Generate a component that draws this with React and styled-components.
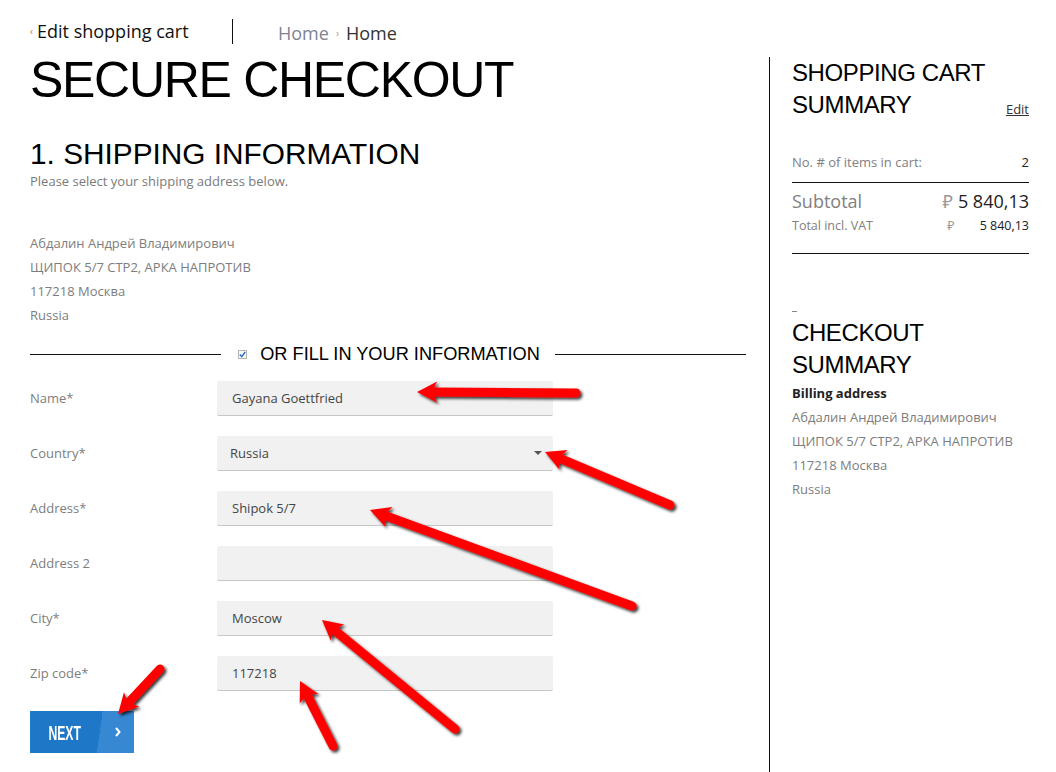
import React from 'react';
import styled, { createGlobalStyle } from 'styled-components';

const Global = createGlobalStyle`
  html, body { margin: 0; padding: 0; background: #fff; }
  body { font-family: 'Open Sans', 'Noto Sans', sans-serif; color: #333; }
  *, *::before, *::after { box-sizing: border-box; }
`;

const Page = styled.div`
  position: relative;
  width: 1056px;
  min-height: 772px;
  overflow: hidden;
`;

const Header = styled.header`
  display: flex;
  align-items: flex-start;
  padding: 19px 0 0 30px;
  height: 44px;
`;

const BackLink = styled.a`
  width: 202px;
  display: flex;
  align-items: center;
  gap: 4px;
  font-size: 18px;
  line-height: 25px;
  color: #111;
  text-decoration: none;
`;

const BackChevron = styled.span`
  font-size: 10px;
  line-height: 25px;
  color: #e0772f;
`;

const HeaderDivider = styled.div`
  width: 1px;
  height: 25px;
  background: #111;
`;

const Crumbs = styled.nav`
  margin-left: 45px;
  display: flex;
  align-items: center;
  gap: 7px;
  font-size: 18px;
  line-height: 25px;
  padding-top: 2px;
`;

const Crumb = styled.span`
  color: ${(p) => (p.$current ? '#333' : '#7d8392')};
`;

const CrumbSep = styled.span`
  font-size: 10px;
  color: #9a9a9a;
`;

const Columns = styled.div`
  display: flex;
  margin-top: 13px;
  min-height: 715px;
`;

const Main = styled.main`
  width: 746px;
  padding-left: 30px;
  margin-right: 23px;
`;

const Side = styled.aside`
  width: 287px;
  border-left: 1px solid #111;
  padding: 0 27px 0 22px;
`;

const Title = styled.h1`
  margin: -2px 0 0;
  font: 400 50px/50px 'Liberation Sans', Arial, sans-serif;
  letter-spacing: -1.3px;
  color: #000;
`;

const SectionTitle = styled.h2`
  margin: 34px 0 0;
  font: 400 29.8px/30px 'Liberation Sans', Arial, sans-serif;
  color: #000;
`;

const Hint = styled.p`
  margin: 3px 0 0;
  font-size: 13px;
  line-height: 18px;
  color: #7a7a7a;
`;

const AddressBlock = styled.div`
  margin-top: ${(p) => p.$top || 0}px;
  font-size: 13px;
  line-height: 24px;
  color: #7d7d7d;
`;

const OrDivider = styled.div`
  margin-top: 15px;
  height: 24px;
  display: flex;
  align-items: center;
`;

const Rule = styled.div`
  flex: 1;
  height: 1px;
  background: #111;
`;

const OrContent = styled.label`
  margin: 0 15px 0 17px;
  display: flex;
  align-items: center;
  gap: 13px;
  font: 400 18.2px/24px 'Liberation Sans', Arial, sans-serif;
  color: #000;
`;

const Check = styled.span`
  width: 9px;
  height: 9px;
  border: 1px solid #b5b5b5;
  background: #f7f7f7;
  display: flex;
  align-items: center;
  justify-content: center;
`;

const Form = styled.div`
  margin-top: 15px;
  display: flex;
  flex-direction: column;
  gap: 20px;
`;

const FormRow = styled.div`
  display: grid;
  grid-template-columns: 187px 336px;
  align-items: center;
`;

const Label = styled.label`
  font-size: 13px;
  line-height: 16px;
  padding-bottom: 1px;
  color: #7d7d7d;
`;

const Field = styled.input`
  height: 35px;
  width: 336px;
  background: #f1f1f1;
  border: none;
  border-bottom: 1px solid #c6c6c6;
  border-radius: 2px;
  padding: 0 15px;
  font: 400 13px 'Open Sans', sans-serif;
  color: #444;
  outline: none;
`;

const SelectBox = styled.div`
  height: 35px;
  background: #f1f1f1;
  border-bottom: 1px solid #c6c6c6;
  border-radius: 2px;
  padding: 0 11px 0 13px;
  display: flex;
  align-items: center;
  justify-content: space-between;
  font-size: 13px;
  color: #444;
`;

const Caret = styled.span`
  width: 0;
  height: 0;
  border-left: 4px solid transparent;
  border-right: 4px solid transparent;
  border-top: 4px solid #555;
`;

const NextButton = styled.button`
  margin-top: 20px;
  width: 104px;
  height: 42px;
  border: none;
  padding: 0;
  display: flex;
  align-items: center;
  background: linear-gradient(98deg, #1e77c7 72px, #3688d2 72px);
  cursor: pointer;
`;

const NextText = styled.span`
  width: 70px;
  display: flex;
  justify-content: center;
`;

const Condensed = styled.span`
  display: inline-block;
  font: 700 20px/20px 'Liberation Sans', Arial, sans-serif;
  color: #fff;
  transform: scaleX(0.61);
  padding-top: 1px;
`;

const NextArrow = styled.span`
  flex: 1;
  display: flex;
  justify-content: center;
  padding-left: 2px;
`;

const SideHead = styled.div`
  display: flex;
  justify-content: space-between;
  align-items: flex-end;
  gap: 8px;
  margin-top: ${(p) => p.$top || 0}px;
`;

const SideTitle = styled.h2`
  margin: 0;
  font: 400 24px/32px 'Liberation Sans', Arial, sans-serif;
  letter-spacing: -0.4px;
  color: #000;
`;

const EditLink = styled.a`
  font-size: 13px;
  line-height: 18px;
  margin-bottom: 3px;
  color: #333;
  text-decoration: underline;
`;

const CountRow = styled.div`
  margin-top: 32px;
  display: flex;
  justify-content: space-between;
  font-size: 13px;
  line-height: 18px;
  padding-bottom: 11px;
  border-bottom: 1px solid #111;
`;

const Muted = styled.span`
  color: #808080;
`;

const Strong = styled.span`
  color: #222;
`;

const Totals = styled.div`
  padding-top: 6px;
  padding-bottom: 18px;
  border-bottom: 1px solid #111;
`;

const TotalRow = styled.div`
  display: flex;
  justify-content: space-between;
  font-size: ${(p) => (p.$big ? 18 : 12.5)}px;
  line-height: ${(p) => (p.$big ? 24 : 18)}px;
  margin-top: ${(p) => (p.$big ? 0 : 4)}px;
`;

const Money = styled.span`
  display: flex;
  align-items: baseline;
  gap: ${(p) => p.$gap}px;
`;

const Rub = styled.span`
  color: #999;
`;

const Dash = styled.div`
  margin-top: 57px;
  width: 5px;
  height: 1px;
  background: #888;
`;

const BillingTitle = styled.div`
  font-size: 13px;
  line-height: 24px;
  font-weight: 700;
  color: #222;
`;

const Overlay = styled.svg`
  position: absolute;
  left: 0;
  top: 0;
  pointer-events: none;
`;

function Arrow({ from, to }) {
  const [x1, y1] = from;
  const [x2, y2] = to;
  const dx = x2 - x1;
  const dy = y2 - y1;
  const len = Math.hypot(dx, dy);
  const ux = dx / len;
  const uy = dy / len;
  const px = -uy;
  const py = ux;
  const hl = 20;
  const hw = 10.5;
  const bx = x2 - ux * hl;
  const by = y2 - uy * hl;
  const nx = x2 - ux * 15;
  const ny = y2 - uy * 15;
  const pts = [
    [x2, y2],
    [bx + px * hw, by + py * hw],
    [nx, ny],
    [bx - px * hw, by - py * hw],
  ]
    .map((p) => p.map((v) => v.toFixed(1)).join(','))
    .join(' ');
  return (
    <g filter="url(#arrowShadow)">
      <line x1={x1} y1={y1} x2={nx} y2={ny} stroke="#ff0000" strokeWidth="9" strokeLinecap="round" />
      <polygon points={pts} fill="#ff0000" />
    </g>
  );
}

const arrows = [
  { from: [576, 393], to: [417, 392] },
  { from: [670, 505], to: [545, 452] },
  { from: [632, 606], to: [370, 510] },
  { from: [455, 729], to: [322, 620] },
  { from: [333, 746], to: [300, 681] },
  { from: [160, 669], to: [118, 714] },
];

const fields = [
  { label: 'Name*', value: 'Gayana Goettfried' },
  { label: 'Country*', value: 'Russia', select: true },
  { label: 'Address*', value: 'Shipok 5/7' },
  { label: 'Address 2', value: '' },
  { label: 'City*', value: 'Moscow' },
  { label: 'Zip code*', value: '117218' },
];

const address = [
  'Абдалин Андрей Владимирович',
  'ЩИПОК 5/7 СТР2, АРКА НАПРОТИВ',
  '117218 Москва',
  'Russia',
];

export default function App() {
  return (
    <Page>
      <Global />
      <Header>
        <BackLink href="#">
          <BackChevron>‹</BackChevron>
          Edit shopping cart
        </BackLink>
        <HeaderDivider />
        <Crumbs>
          <Crumb>Home</Crumb>
          <CrumbSep>›</CrumbSep>
          <Crumb $current>Home</Crumb>
        </Crumbs>
      </Header>
      <Columns>
        <Main>
          <Title>SECURE CHECKOUT</Title>
          <SectionTitle>1. SHIPPING INFORMATION</SectionTitle>
          <Hint>Please select your shipping address below.</Hint>
          <AddressBlock $top={41}>
            {address.map((l) => (
              <div key={l}>{l}</div>
            ))}
          </AddressBlock>
          <OrDivider>
            <Rule />
            <OrContent>
              <Check>
                <svg width="7" height="7" viewBox="0 0 7 7">
                  <polyline points="0.8,3.6 2.7,5.6 6.2,1" fill="none" stroke="#2a6fc0" strokeWidth="1.4" />
                </svg>
              </Check>
              OR FILL IN YOUR INFORMATION
            </OrContent>
            <Rule />
          </OrDivider>
          <Form>
            {fields.map((f) => (
              <FormRow key={f.label}>
                <Label>{f.label}</Label>
                {f.select ? (
                  <SelectBox>
                    {f.value}
                    <Caret />
                  </SelectBox>
                ) : (
                  <Field defaultValue={f.value} readOnly />
                )}
              </FormRow>
            ))}
          </Form>
          <NextButton>
            <NextText>
              <Condensed>NEXT</Condensed>
            </NextText>
            <NextArrow>
              <svg width="6" height="10" viewBox="0 0 6 10">
                <polyline points="1,1 4.5,5 1,9" fill="none" stroke="#fff" strokeWidth="2" />
              </svg>
            </NextArrow>
          </NextButton>
        </Main>
        <Side>
          <SideHead>
            <SideTitle>SHOPPING CART SUMMARY</SideTitle>
            <EditLink href="#">Edit</EditLink>
          </SideHead>
          <CountRow>
            <Muted>No. # of items in cart:</Muted>
            <Strong>2</Strong>
          </CountRow>
          <Totals>
            <TotalRow $big>
              <Muted>Subtotal</Muted>
              <Money $gap={5}>
                <Rub>₽</Rub>
                <Strong>5 840,13</Strong>
              </Money>
            </TotalRow>
            <TotalRow>
              <Muted>Total incl. VAT</Muted>
              <Money $gap={25}>
                <Rub>₽</Rub>
                <Strong>5 840,13</Strong>
              </Money>
            </TotalRow>
          </Totals>
          <Dash />
          <SideHead $top={5}>
            <SideTitle>CHECKOUT SUMMARY</SideTitle>
          </SideHead>
          <BillingTitle>Billing address</BillingTitle>
          <AddressBlock>
            {address.map((l) => (
              <div key={l}>{l}</div>
            ))}
          </AddressBlock>
        </Side>
      </Columns>
      <Overlay width="1056" height="772" viewBox="0 0 1056 772">
        <defs>
          <filter id="arrowShadow" x="-30%" y="-30%" width="160%" height="160%">
            <feDropShadow dx="2" dy="2" stdDeviation="1.6" floodColor="#000" floodOpacity="0.8" />
          </filter>
        </defs>
        {arrows.map((a, i) => (
          <Arrow key={i} from={a.from} to={a.to} />
        ))}
      </Overlay>
    </Page>
  );
}
